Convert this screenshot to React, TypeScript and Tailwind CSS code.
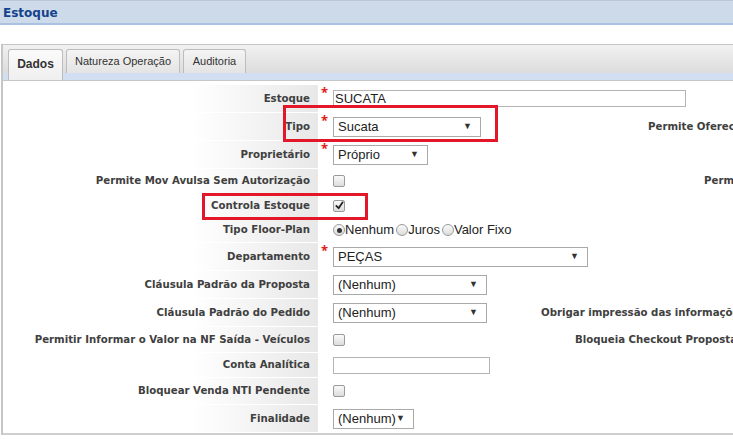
import React from 'react';

const labelFont = "font-['DejaVu_Sans',sans-serif]";
const fieldFont = "font-['Liberation_Sans',Arial,sans-serif]";

interface RowProps {
  h: string;
  label: string;
  req?: boolean;
  children?: React.ReactNode;
  right?: React.ReactNode;
}

const Row: React.FC<RowProps> = ({ h, label, req, children, right }) => (
  <div className={`flex ${h} border-b border-white`}>
    <div
      className={`w-[315px] shrink-0 flex items-center justify-end pr-[8px] bg-linear-to-r from-white from-60% to-[#e8e8e8] text-[10.2px] font-bold text-[#404040] whitespace-nowrap ${labelFont}`}
    >
      {label}
    </div>
    <div className="w-[15px] shrink-0 relative">
      {req && <span className="absolute left-[3px] top-[1px] text-[#e01b1b] text-[13px] font-bold leading-none">*</span>}
    </div>
    <div className="w-[170px] shrink-0 flex items-center">{children}</div>
    {right}
  </div>
);

const RightLabel: React.FC<{ text: string; cls: string }> = ({ text, cls }) => (
  <div className={`flex items-center whitespace-nowrap text-[10.2px] font-bold text-[#404040] ${labelFont} ${cls}`}>{text}</div>
);

const Select: React.FC<{ value: string; w: string }> = ({ value, w }) => (
  <div
    className={`${w} h-[20px] shrink-0 flex items-center justify-between pl-[4px] pr-[8px] border border-[#a9a9a9] bg-white text-[13px] text-[#222] ${fieldFont}`}
  >
    <span>{value}</span>
    <span className="text-[9px] text-[#333]">▼</span>
  </div>
);

const TextInput: React.FC<{ value?: string; w: string }> = ({ value, w }) => (
  <div
    className={`${w} h-[17px] shrink-0 flex items-center px-[1px] border border-[#b5b5b5] bg-white text-[13px] leading-none text-[#222] ${fieldFont}`}
  >
    {value}
  </div>
);

const Check: React.FC<{ checked?: boolean }> = ({ checked }) => (
  <div className="w-[12px] h-[12px] rounded-[2px] border border-[#9a9a9a] bg-linear-to-b from-[#fafafa] to-[#dcdcdc] flex items-center justify-center">
    {checked && (
      <svg width="9" height="9" viewBox="0 0 10 10">
        <path d="M1.5 5.5 L4 8 L8.5 1.5" fill="none" stroke="#222" strokeWidth="2" strokeLinecap="round" strokeLinejoin="round" />
      </svg>
    )}
  </div>
);

const Radio: React.FC<{ checked?: boolean }> = ({ checked }) => (
  <div className="w-[12px] h-[12px] rounded-full border border-[#9a9a9a] bg-linear-to-b from-[#fafafa] to-[#dcdcdc] flex items-center justify-center">
    {checked && <div className="w-[5px] h-[5px] rounded-full bg-[#333]" />}
  </div>
);

export default function App() {
  return (
    <div className="relative w-[733px] h-[439px] overflow-hidden bg-white">
      <div className="h-[25px] bg-[#cddaea] border-t border-[#bdc7d3] border-b-2 border-b-[#a9c1e3] flex items-center pl-[3px] pt-[1px]">
        <span className={`text-[12px] font-bold text-[#15428b] ${labelFont}`}>Estoque</span>
      </div>
      <div className="h-[19px]" />

      <div className="ml-[1px] w-[900px] border-l-2 border-t border-[#c6c6c6]">
        <div className="h-[35px] bg-linear-to-b from-[#f1f1f1] to-[#d7d7d7] relative flex items-end pl-[5px] gap-[3px]">
          <div className="absolute left-0 right-0 bottom-0 h-[7px] bg-[#d2dff2]" />
          <div className="relative z-10 h-[31px] w-[55px] rounded-t-[3px] border border-b-0 border-[#bdbdbd] bg-linear-to-b from-[#fbfbfb] to-[#efefef] flex items-center justify-center pb-[2px]">
            <span className={`text-[12px] font-bold text-[#333] ${fieldFont}`}>Dados</span>
          </div>
          <div className="relative z-10 mb-[7px] h-[24px] w-[114px] rounded-t-[3px] border border-b-0 border-[#bdbdbd] bg-linear-to-b from-[#f4f4f4] to-[#e4e4e4] flex items-center justify-center">
            <span className={`text-[11px] text-[#333] ${fieldFont}`}>Natureza Operação</span>
          </div>
          <div className="relative z-10 mb-[7px] h-[24px] w-[63px] rounded-t-[3px] border border-b-0 border-[#bdbdbd] bg-linear-to-b from-[#f4f4f4] to-[#e4e4e4] flex items-center justify-center">
            <span className={`text-[11px] text-[#333] ${fieldFont}`}>Auditoria</span>
          </div>
        </div>
        <div className="border-t border-[#c6c6c6] pt-[4px] border-b-2 border-b-[#cfcfcf]">
          <Row h="h-[28px]" label="Estoque" req>
            <div className="w-[353px] shrink-0">
              <TextInput value="SUCATA" w="w-[353px]" />
            </div>
          </Row>
          <Row h="h-[28px]" label="Tipo" req right={<RightLabel text="Permite Oferecer" cls="pl-[145px]" />}>
            <Select value="Sucata" w="w-[148px]" />
          </Row>
          <Row h="h-[28px]" label="Proprietário" req>
            <Select value="Próprio" w="w-[95px]" />
          </Row>
          <Row h="h-[25px]" label="Permite Mov Avulsa Sem Autorização" right={<RightLabel text="Permite" cls="pl-[201px]" />}>
            <Check />
          </Row>
          <Row h="h-[24px]" label="Controla Estoque">
            <Check checked />
          </Row>
          <Row h="h-[25px]" label="Tipo Floor-Plan">
            <div className={`flex items-center text-[13px] text-[#222] whitespace-nowrap ${fieldFont}`}>
              <Radio checked />
              <span className="mr-[2px]">Nenhum</span>
              <Radio />
              <span className="mr-[2px]">Juros</span>
              <Radio />
              <span>Valor Fixo</span>
            </div>
          </Row>
          <Row h="h-[28px]" label="Departamento" req>
            <Select value="PEÇAS" w="w-[255px]" />
          </Row>
          <Row h="h-[28px]" label="Cláusula Padrão da Proposta">
            <Select value="(Nenhum)" w="w-[154px]" />
          </Row>
          <Row h="h-[28px]" label="Cláusula Padrão do Pedido" right={<RightLabel text="Obrigar impressão das informações" cls="pl-[38px]" />}>
            <Select value="(Nenhum)" w="w-[154px]" />
          </Row>
          <Row h="h-[26px]" label="Permitir Informar o Valor na NF Saída - Veículos" right={<RightLabel text="Bloqueia Checkout Proposta" cls="pl-[72px]" />}>
            <Check />
          </Row>
          <Row h="h-[25px]" label="Conta Analítica">
            <TextInput w="w-[157px]" />
          </Row>
          <Row h="h-[27px]" label="Bloquear Venda NTI Pendente">
            <Check />
          </Row>
          <Row h="h-[28px]" label="Finalidade">
            <Select value="(Nenhum)" w="w-[81px]" />
          </Row>
        </div>
      </div>

      <div className="absolute left-[283px] top-[105px] w-[215px] h-[37px] border-[3px] border-[#e3172a]" />
      <div className="absolute left-[202px] top-[193px] w-[166px] h-[27px] border-[3px] border-[#e3172a]" />
    </div>
  );
}
